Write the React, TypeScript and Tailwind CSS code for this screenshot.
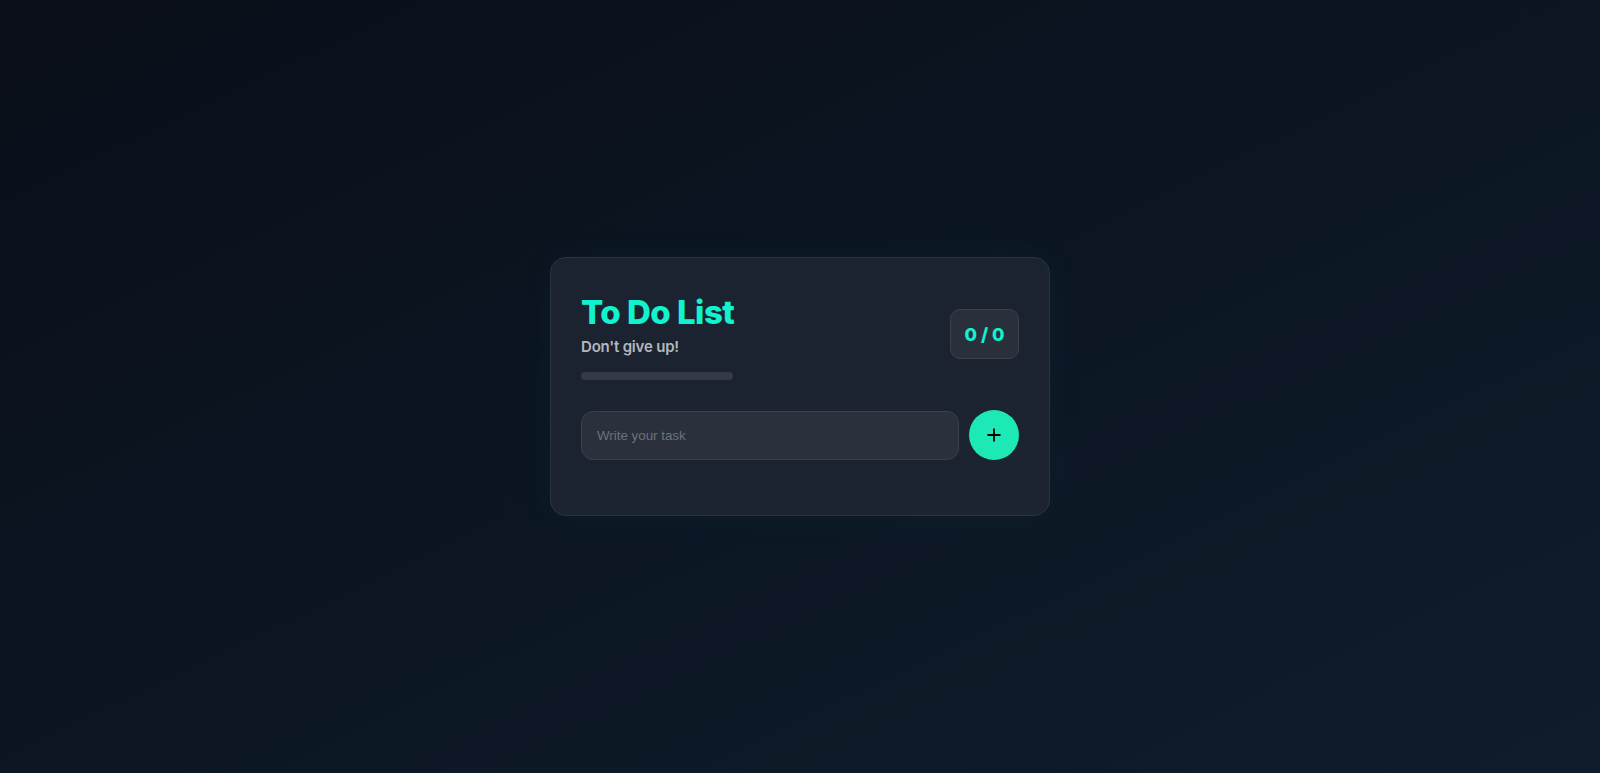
import React, { useState } from 'react';

export default function App() {
  const [task, setTask] = useState('');
  const [tasks, setTasks] = useState<{ text: string; done: boolean }[]>([]);

  const done = tasks.filter((t) => t.done).length;

  const addTask = () => {
    if (!task.trim()) return;
    setTasks([...tasks, { text: task.trim(), done: false }]);
    setTask('');
  };

  return (
    <div className="min-h-screen w-full flex items-center justify-center bg-gradient-to-br from-[#0a0f19] via-[#0c1623] to-[#101c2b] font-['Inter',sans-serif]">
      {/* Card */}
      <div className="w-[500px] rounded-2xl border border-[#2c3340] bg-[#1e2431]/95 p-[30px] pb-[26px] shadow-[0_0_40px_rgba(20,240,200,0.04)]">
        <header className="flex items-center justify-between">
          <div className="flex flex-col">
            <h1 className="text-[33px] leading-[48px] font-extrabold tracking-[-0.5px] text-[#12f2cf]">To Do List</h1>
            <p className="text-[15px] leading-[22px] font-semibold text-[#b4b7bd] tracking-[-0.2px]">Don't give up!</p>
            <div className="mt-[14px] h-2 w-[152px] rounded-full bg-[#343a47]">
              <div className="h-full rounded-full bg-[#12f2cf]" style={{ width: tasks.length ? `${(done / tasks.length) * 100}%` : '0%' }}></div>
            </div>
          </div>
          <div className="w-[69px] h-[50px] rounded-[10px] border border-[#3a404c] bg-[#2a303b] flex items-center justify-center">
            <span className="text-[18px] font-extrabold text-[#12f2cf]">{done} / {tasks.length}</span>
          </div>
        </header>

        <form
          className="mt-[30px] flex items-center gap-[10px]"
          onSubmit={(e) => {
            e.preventDefault();
            addTask();
          }}
        >
          <input
            value={task}
            onChange={(e) => setTask(e.target.value)}
            placeholder="Write your task"
            className="h-[49px] flex-1 rounded-xl border border-[#3a404c] bg-[#2a303c] px-[15px] font-['Liberation_Sans',Arial,sans-serif] text-[13.33px] text-gray-200 placeholder:text-[#6d727b] outline-none"
          />
          <button type="submit" className="w-[50px] h-[50px] rounded-full bg-[#1de9b6] flex items-center justify-center">
            <svg width="16" height="16" viewBox="0 0 16 16" fill="none" stroke="#000" strokeWidth="1.8">
              <path d="M8 1.5v13M1.5 8h13" />
            </svg>
          </button>
        </form>

        <ul className="mt-[29px] flex flex-col gap-2">
          {tasks.map((t, i) => (
            <li key={i} className="text-gray-300 text-sm">{t.text}</li>
          ))}
        </ul>
      </div>
    </div>
  );
}
